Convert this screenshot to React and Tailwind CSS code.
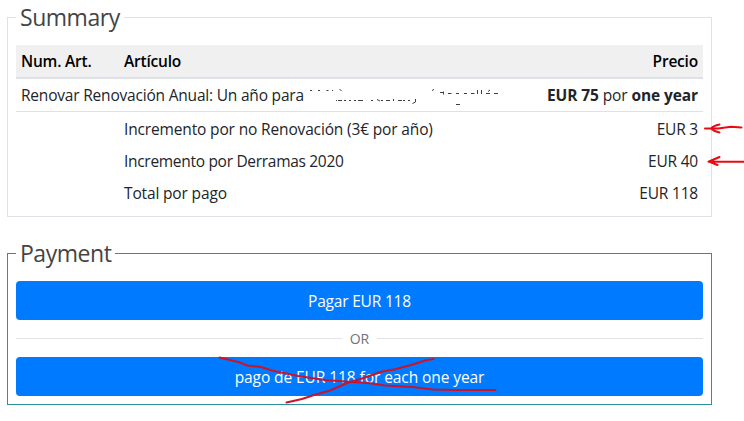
function Panel({ title, borderClass, children }) {
  return (
    <fieldset className={`w-[705px] border px-2 pb-2 ${borderClass}`}>
      <legend className="h-[35px] px-1 text-[23px] leading-[35px] whitespace-nowrap text-[#444]">
        <span className="tracking-[-0.47px]">{title}</span>
      </legend>
      <div className="pt-[10px]">{children}</div>
    </fieldset>
  );
}

const charges = [
  { label: "Incremento por no Renovación (3€ por año)", price: "EUR 3", tracking: "tracking-[-0.15px]" },
  { label: "Incremento por Derramas 2020", price: "EUR 40", tracking: "tracking-[-0.3px]" },
  { label: "Total por pago", price: "EUR 118", tracking: "tracking-[-0.15px]" },
];

/* Remnants of the erased customer name. */
function ErasedName() {
  return (
    <svg className="ml-[5px] inline-block" width="192" height="20" viewBox="308 85 192 20" fill="none" stroke="#3b3f44">
      <path
        d="M309 90.500h2M317 90.500h2M325.500 90.500h2M331 90.500h1M338.500 89.500l2 1M431 90.500l2-1M439 92.500h3M442.500 91.500v3M447 93.500h3.500M455 93.500h3M463 93.500h3M470 93.500h3.500M476.500 90v4M480.500 90v4M485 93.500h4M487 91.500l2-1.500M493 93.500h4"
      />
      <path
        d="M335 100.500h1M337 100.500h4M343 100.500h2M348 100.500h2M353 100.500h2M357 100.500h5M370 100.500h2M376 99.500l3 1.500M380 100.500h2M385 100.500h4M392.500 99v2M397 100.500h4M402 100.500h2M407 100.500h2M414.500 99v3l-3 1.500M455 104.500h4"
      />
    </svg>
  );
}

export default function App() {
  return (
    <div className="relative h-[421px] w-[744px] overflow-hidden bg-white pl-[7px] font-['Open_Sans','Noto_Sans',sans-serif] text-[15.5px] leading-6 text-[#212529]">
      <Panel title="Summary" borderClass="border-[#dee2e6]">
        <table className="w-full table-fixed border-separate border-spacing-0 whitespace-nowrap">
          <colgroup>
            <col className="w-[103px]" />
            <col />
            <col className="w-[180px]" />
          </colgroup>
          <thead>
            <tr className="h-[34px] bg-[#f0f0f0] text-left tracking-[-0.2px] text-black">
              <th className="border-b-2 border-[#dee2e6] px-[5px] py-0 font-semibold">Num. Art.</th>
              <th className="border-b-2 border-[#dee2e6] px-[5px] py-0 font-semibold">Artículo</th>
              <th className="border-b-2 border-[#dee2e6] px-[5px] py-0 text-right font-semibold">Precio</th>
            </tr>
          </thead>
          <tbody>
            <tr className="h-[33px]">
              <td colSpan={2} className="border-b border-[#dee2e6] px-[5px] py-0">
                <div className="flex items-center">
                  <span className="tracking-[-0.2px]">Renovar Renovación Anual: Un año para</span>
                  <ErasedName />
                </div>
              </td>
              <td className="border-b border-[#dee2e6] px-[5px] py-0 text-right">
                <span className="tracking-[-0.1px]"><b>EUR 75</b> por <b>one year</b></span>
              </td>
            </tr>
            {charges.map((c) => (
              <tr key={c.label} className="h-8">
                <td className="p-0" />
                <td className="px-[5px] pt-[2px] pb-0"><span className={c.tracking}>{c.label}</span></td>
                <td className="px-[5px] pt-[2px] pb-0 text-right"><span className="tracking-[-0.2px]">{c.price}</span></td>
              </tr>
            ))}
          </tbody>
        </table>
      </Panel>

      <div className="h-[19px]" />

      <Panel title="Payment" borderClass="border-[#2b9297]">
        <button className="flex h-[39px] w-full items-center justify-center rounded bg-[#007bff] pt-px text-white">
          <span className="tracking-[-0.2px]">Pagar EUR 118</span>
        </button>
        <div className="flex h-[37px] items-center gap-2 text-[14px] text-[#6c757d]">
          <div className="h-px flex-1 bg-[#e2e3e5]" />
          <span>OR</span>
          <div className="h-px flex-1 bg-[#e2e3e5]" />
        </div>
        <button className="flex h-[39px] w-full items-center justify-center rounded bg-[#007bff] pt-px text-white">
          <span className="tracking-[-0.08px]">pago de EUR 118 for each one year</span>
        </button>
      </Panel>

      {/* Hand-drawn red marks over the form */}
      <svg className="pointer-events-none absolute inset-0" width="744" height="421" fill="none" strokeLinecap="round" strokeLinejoin="round">
        <g stroke="#ea0a12" strokeWidth="2">
          <path d="M705 128.500H718L731 126.800L741.500 127.500M719.500 124.500Q713 126 711 128.500Q714 131.500 719.500 132.500" />
          <path d="M708.500 161.800H744M719.500 157L709 161.500L717.500 165" />
        </g>
        <g stroke="#c9142a" strokeWidth="2">
          <path d="M219.500 357.500L240 362.500L247 365.500L261 367L272 370.500L298 376L325 380L345 381.500L368 383L385 385.500L412 387L433 389.500L455 390H495.500" />
          <path d="M286.500 402.500L302 399L314 395L330 390.500L347 383L362 378.500L382 371.500L394 369.500L411 365L425 360.500L433.500 359" />
        </g>
      </svg>
    </div>
  );
}
